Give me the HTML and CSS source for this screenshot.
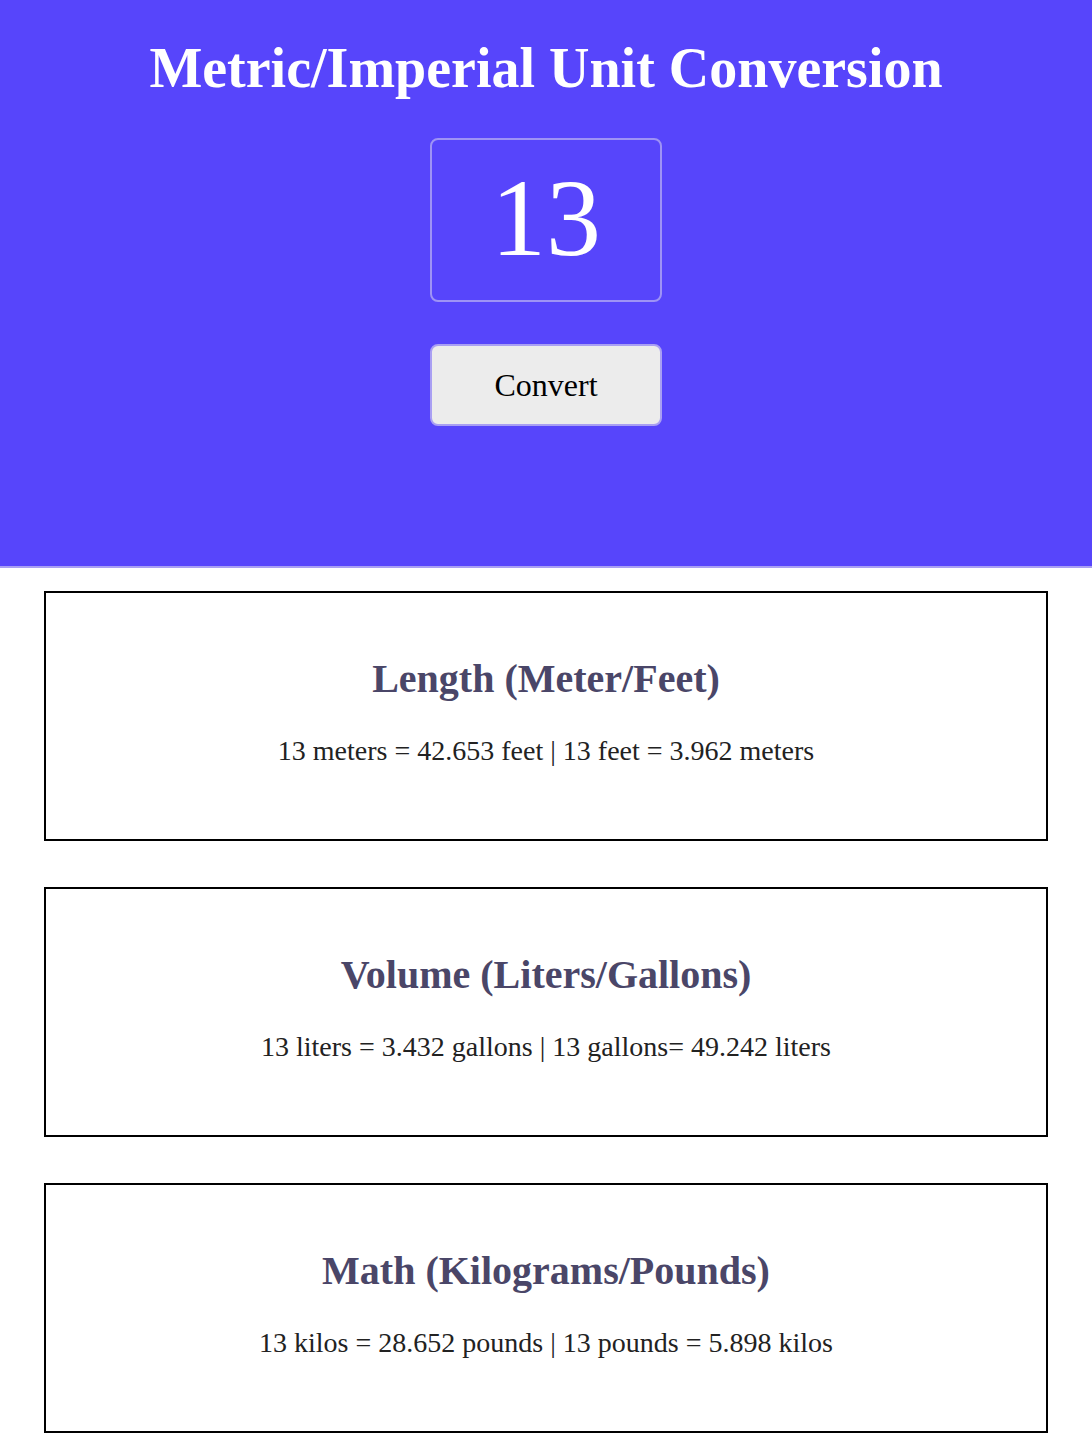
FILE: index.html
```html
<!DOCTYPE html>
<html>
<head>
<meta charset="utf-8">
<link rel="stylesheet" href="styles.css">
</head>
<body>
<header class="hero">
  <h1 class="title">Metric/Imperial Unit Conversion</h1>
  <div class="number-box">13</div>
  <button class="convert-btn">Convert</button>
</header>
<main class="results">
  <section class="card">
    <h2 class="card-title">Length (Meter/Feet)</h2>
    <p class="card-text">13 meters = 42.653 feet | 13 feet = 3.962 meters</p>
  </section>
  <section class="card">
    <h2 class="card-title">Volume (Liters/Gallons)</h2>
    <p class="card-text">13 liters = 3.432 gallons | 13 gallons= 49.242 liters</p>
  </section>
  <section class="card">
    <h2 class="card-title">Math (Kilograms/Pounds)</h2>
    <p class="card-text">13 kilos = 28.652 pounds | 13 pounds = 5.898 kilos</p>
  </section>
</main>
</body>
</html>
```

FILE: styles.css
```css
html, body {
  margin: 0;
  padding: 0;
}
body {
  font-family: "Liberation Serif", "Times New Roman", serif;
  background: #fff;
}
.hero {
  background: #5745fb;
  border-bottom: 2px solid #a99ff3;
  height: 568px;
  box-sizing: border-box;
  display: flex;
  flex-direction: column;
  align-items: center;
  padding-top: 37px;
}
.title {
  margin: 0;
  color: #fff;
  font-size: 56px;
  font-weight: bold;
  line-height: 62px;
}
.number-box {
  margin-top: 39px;
  width: 232px;
  height: 164px;
  box-sizing: border-box;
  border: 2px solid #9e93f5;
  border-radius: 8px;
  color: #fff;
  font-size: 110px;
  line-height: 1;
  display: flex;
  align-items: center;
  justify-content: center;
  padding-bottom: 4px;
}
.convert-btn {
  margin-top: 42px;
  width: 232px;
  height: 82px;
  box-sizing: border-box;
  background: #ececec;
  border: 2px solid #a99ff3;
  border-radius: 8px;
  font-family: "Liberation Serif", "Times New Roman", serif;
  font-size: 32px;
  color: #000;
  padding: 0;
}
.results {
  padding: 23px 44px 0;
  display: flex;
  flex-direction: column;
  gap: 46px;
}
.card {
  border: 2px solid #000;
  height: 250px;
  box-sizing: border-box;
  text-align: center;
  padding-top: 62px;
}
.card-title {
  margin: 0;
  color: #4a4668;
  font-size: 40px;
  font-weight: bold;
  line-height: 48px;
}
.card-text {
  margin: 31px 0 0;
  color: #222;
  font-size: 28px;
  line-height: 34px;
}
```
